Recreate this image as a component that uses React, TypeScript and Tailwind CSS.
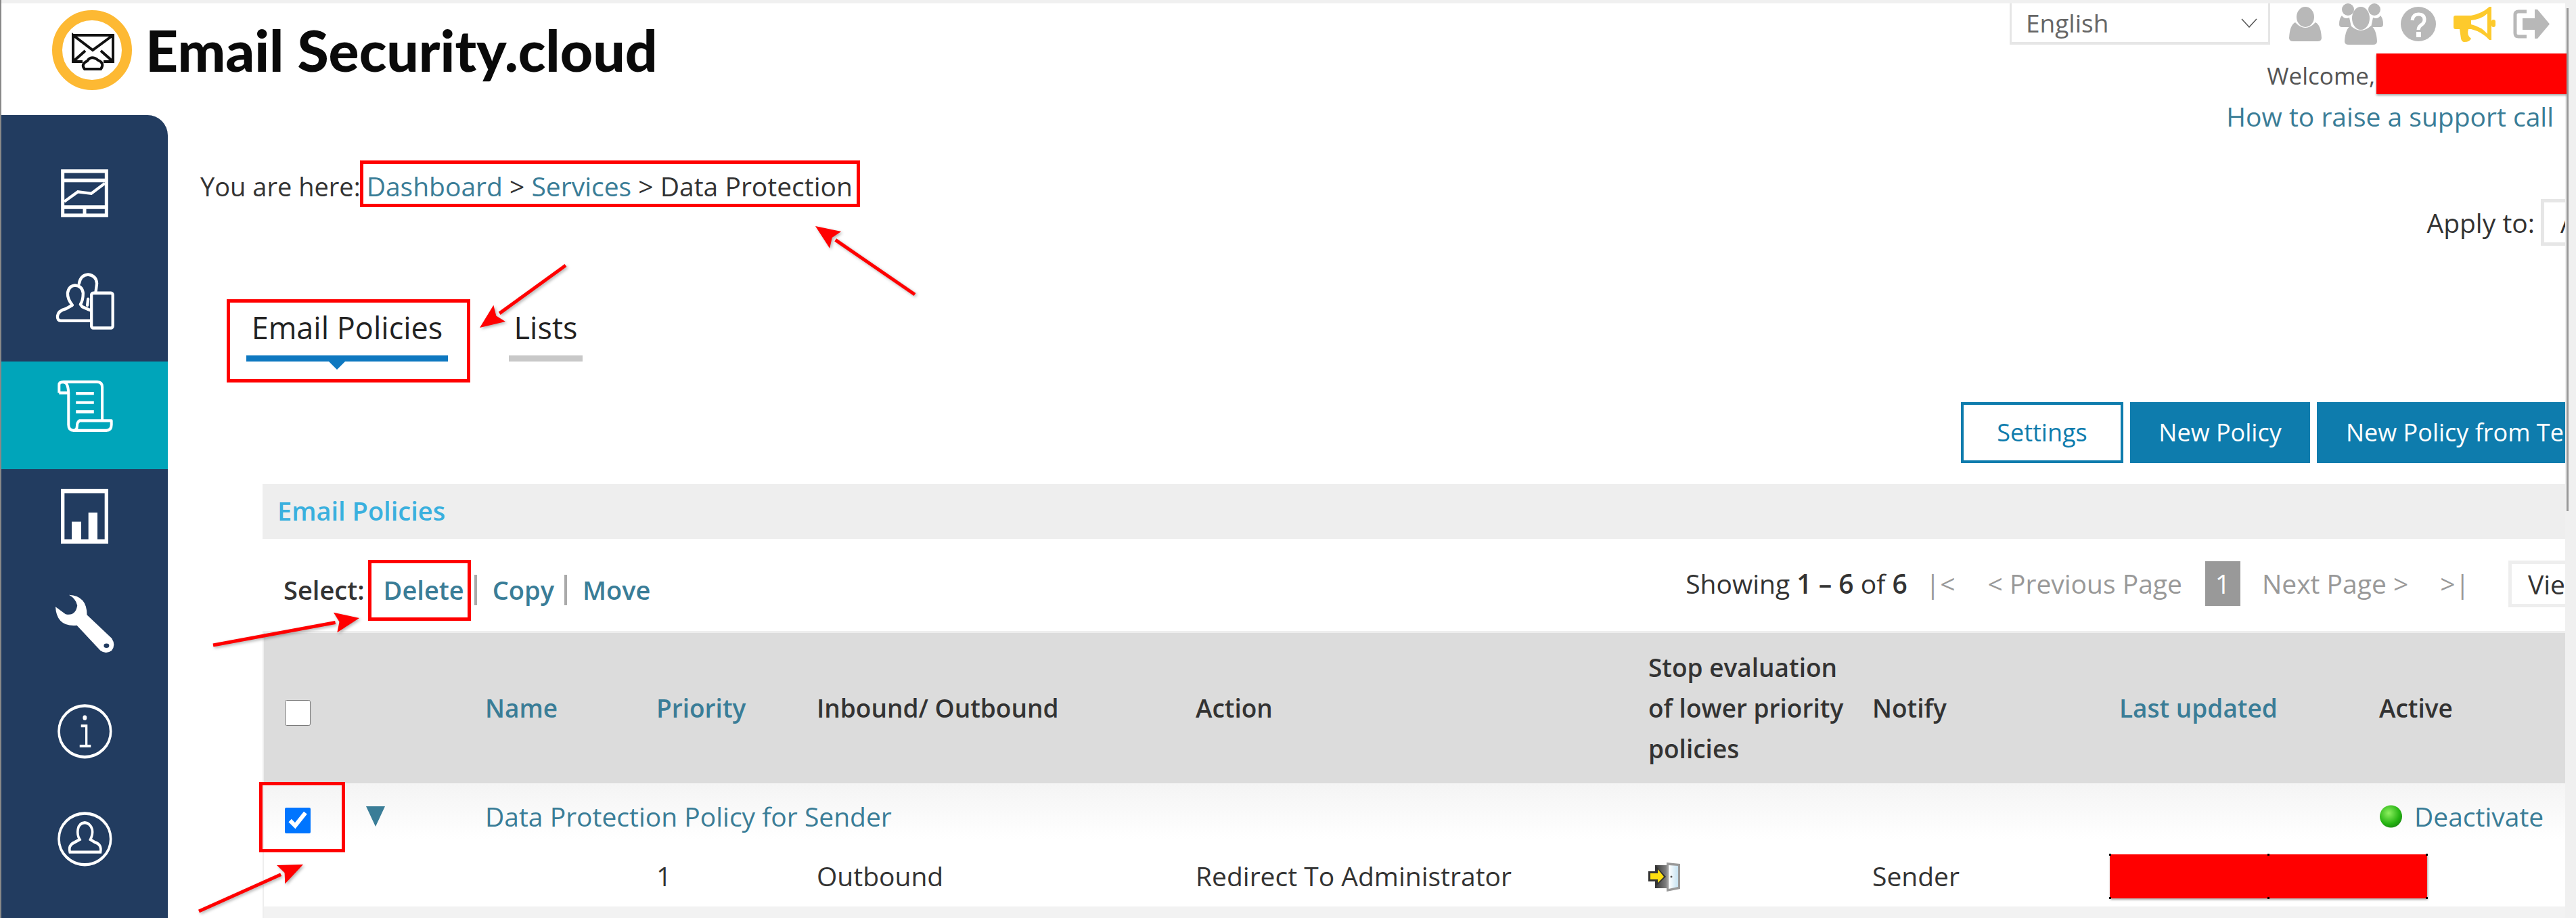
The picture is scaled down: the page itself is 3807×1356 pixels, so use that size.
import type { ReactNode } from 'react';

const GRID_COLS = 'grid grid-cols-[327px_253px_237px_560px_669px_331px_365px_384px_275px]';

const Arrow = ({ x1, y1, x2, y2 }: { x1: number; y1: number; x2: number; y2: number }) => {
    const len = Math.hypot(x2 - x1, y2 - y1);
    const ux = (x2 - x1) / len;
    const uy = (y2 - y1) / len;
    const bx = x2 - ux * 36;
    const by = y2 - uy * 36;
    const nx = bx - ux * -6;
    const ny = by - uy * -6;
    const points = `${x2},${y2} ${bx - uy * 15},${by + ux * 15} ${nx},${ny} ${bx + uy * 15},${by - ux * 15}`;
    return (
        <g>
            <line x1={x1} y1={y1} x2={bx} y2={by} stroke="#f00" strokeWidth="5" />
            <polygon points={points} fill="#f00" />
        </g>
    );
};

const DashboardIcon = () => (
    <svg viewBox="280 252 210 198" preserveAspectRatio="none" className="w-[70px] h-[71px]" fill="none" stroke="#fff" strokeWidth="15">
        <rect x="288" y="260" width="194" height="182" />
        <path d="M288 298H482M288 408H482M385 408V442" />
        <path d="M295 385L355 345L415 352L475 310" strokeWidth="12" />
    </svg>
);

const PeopleIcon = () => (
    <svg viewBox="250 678 268 242" preserveAspectRatio="none" className="w-[89px] h-[86px]" fill="none" stroke="#fff" strokeWidth="13" strokeLinecap="round" strokeLinejoin="round">
        <path d="M408 880H278Q260 880 262 860Q265 838 300 830L328 815Q306 790 307 765Q312 735 340 733Q372 735 376 765Q376 795 364 812L372 822L405 835" />
        <path d="M358 725Q365 690 398 688Q435 692 437 725L432 762M395 815L398 790" />
        <rect x="413" y="765" width="95" height="145" rx="8" />
    </svg>
);

const ScrollIcon = () => (
    <svg viewBox="260 1124 250 218" preserveAspectRatio="none" className="w-[83px] h-[78px]" fill="none" stroke="#fff" strokeWidth="12" strokeLinejoin="round">
        <path d="M290 1133H440Q462 1133 462 1155V1293" />
        <path d="M270 1178V1145Q270 1133 290 1133Q310 1135 312 1178H270" />
        <path d="M312 1178V1310Q312 1333 335 1333H480Q503 1333 503 1310V1293H360Q350 1300 350 1315Q350 1333 335 1333" />
        <path d="M345 1180H425M345 1218H425M345 1256H425" />
    </svg>
);

const ReportIcon = () => (
    <svg viewBox="280 5 210 200" preserveAspectRatio="none" className="w-[70px] h-[81px]" fill="#fff">
        <rect x="288" y="13" width="194" height="184" fill="none" stroke="#fff" strokeWidth="16" />
        <rect x="328" y="125" width="42" height="68" />
        <rect x="402" y="92" width="40" height="101" />
    </svg>
);

const WrenchIcon = () => (
    <svg viewBox="255 390 262 215" preserveAspectRatio="none" className="w-[87px] h-[87px]">
        <path
            fill="#fff"
            d="M315 392Q395 395 395 465L505 550Q525 575 505 595Q480 610 455 595L350 503Q260 510 255 435L300 462Q345 470 352 430Q345 405 315 392Z"
        />
        <ellipse cx="482" cy="577" rx="12" ry="8" fill="#223c60" />
    </svg>
);

const InfoIcon = () => (
    <svg viewBox="263 788 245 201" preserveAspectRatio="none" className="w-[81px] h-[81px]" fill="none" stroke="#fff">
        <ellipse cx="385" cy="888" rx="116" ry="94" strokeWidth="11" />
        <circle cx="385" cy="838" r="9" fill="#fff" stroke="none" />
        <path d="M368 868H392V942M362 942H412" strokeWidth="10" />
    </svg>
);

const UserCircleIcon = () => (
    <svg viewBox="263 1180 245 201" preserveAspectRatio="none" className="w-[81px] h-[81px]" fill="none" stroke="#fff">
        <ellipse cx="385" cy="1280" rx="116" ry="94" strokeWidth="11" />
        <path
            d="M318 1328H455Q462 1300 430 1292L410 1282Q422 1262 418 1245Q410 1222 385 1220Q358 1222 354 1245Q350 1265 362 1282L340 1292Q310 1302 318 1328Z"
            strokeWidth="11"
        />
    </svg>
);

const PersonIcon = () => (
    <svg viewBox="0 0 48 51" className="w-[48px] h-[51px]" fill="#b8b8b8">
        <ellipse cx="24" cy="15" rx="13" ry="15" />
        <path d="M9 23Q24 39 39 23Q47 27 48 46Q48 51 42 51H6Q0 51 0 46Q1 27 9 23Z" />
    </svg>
);

const GroupIcon = () => (
    <svg viewBox="0 0 65 61" className="w-[65px] h-[61px]" fill="#b8b8b8">
        <ellipse cx="13" cy="9" rx="9" ry="9" />
        <ellipse cx="52" cy="9" rx="9" ry="9" />
        <path d="M4 18Q8 24 15 21L18 35H4Q0 35 0 31Q0 22 4 18Z" />
        <path d="M61 18Q57 24 50 21L47 35H61Q65 35 65 31Q65 22 61 18Z" />
        <ellipse cx="32" cy="22" rx="13" ry="17" />
        <path d="M17 33Q32 47 47 33Q55 38 56 56Q56 61 50 61H14Q8 61 8 56Q9 38 17 33Z" />
    </svg>
);

const HelpIcon = () => (
    <svg viewBox="0 0 52 51" className="w-[52px] h-[51px]">
        <ellipse cx="26" cy="25.5" rx="26" ry="25.5" fill="#b8b8b8" />
        <path d="M17 20Q18 11 26 11Q35 11 35 19Q35 24 30 27Q26 30 26 34" fill="none" stroke="#fff" strokeWidth="5" />
        <rect x="23" y="37" width="7" height="8" fill="#fff" />
    </svg>
);

const MegaphoneIcon = () => (
    <svg viewBox="0 0 62 52" className="w-[62px] h-[52px]" fill="#fdca2c">
        <path d="M3 13H26Q42 10 53 0H56V49H53Q42 37 26 33H3Q0 33 0 30V16Q0 13 3 13Z" />
        <path d="M26 20Q42 18 50 10V40Q42 30 26 26Z" fill="#fff" />
        <rect x="56" y="19" width="6" height="11" rx="3" />
        <path d="M9 33H22Q19 42 26 47Q24 52 16 52Q12 52 11 47Z" />
    </svg>
);

const LogoutIcon = () => (
    <svg viewBox="0 0 54 43" className="w-[54px] h-[43px]">
        <path d="M20 3H8Q3 3 3 8V35Q3 40 8 40H20" fill="none" stroke="#b8b8b8" strokeWidth="5" />
        <path d="M14 13H32V0H36L54 21.5L36 43H32V30H14Z" fill="#b8b8b8" />
    </svg>
);

const LogoMark = () => (
    <svg viewBox="0 0 118 118" className="w-[118px] h-[118px] shrink-0">
        <circle cx="59" cy="59" r="51.5" fill="none" stroke="#fdb933" strokeWidth="15" />
        <path
            d="M31 37H90V76H76M45 76H31V37L60 59L90 37M31 76L49 60M90 76L72 60"
            fill="none"
            stroke="#111"
            strokeWidth="4"
        />
        <path d="M48 87Q42 80 52 75Q58 66 68 74Q78 78 72 87Z" fill="#fff" stroke="#111" strokeWidth="4" />
    </svg>
);

const DoorIcon = () => (
    <svg viewBox="0 0 48 45" className="w-[48px] h-[45px]">
        <defs>
            <linearGradient id="doorGap" x1="0" x2="1" y1="0" y2="0">
                <stop offset="0" stopColor="#333" />
                <stop offset="1" stopColor="#888" />
            </linearGradient>
            <linearGradient id="doorPanel" x1="0" x2="1" y1="0" y2="0">
                <stop offset="0" stopColor="#fff" />
                <stop offset="1" stopColor="#c6e2f2" />
            </linearGradient>
        </defs>
        <rect x="10" y="6" width="18" height="34" fill="url(#doorGap)" />
        <path d="M27 2L47 4V41L27 45Z" fill="#9a9a9a" />
        <path d="M30 6L44 7V38L30 41Z" fill="url(#doorPanel)" />
        <circle cx="34" cy="23" r="1.5" fill="#555" />
        <path d="M0 15H11V7L26 23L11 37V30H0Z" fill="#333" />
        <path d="M3 18H14V12L23 23L14 32V27H3Z" fill="#fde010" />
    </svg>
);

const StatusDot = () => (
    <svg viewBox="0 0 35 34" className="w-[35px] h-[34px]">
        <defs>
            <radialGradient id="statusGreen" cx="0.4" cy="0.35" r="0.7">
                <stop offset="0" stopColor="#8ef060" />
                <stop offset="0.7" stopColor="#25b412" />
                <stop offset="1" stopColor="#1a8a10" />
            </radialGradient>
        </defs>
        <ellipse cx="17.5" cy="17" rx="16.5" ry="16.5" fill="url(#statusGreen)" />
    </svg>
);

const NavItem = ({ className, children }: { className: string; children: ReactNode }) => (
    <div className={`flex justify-center ${className}`}>{children}</div>
);

const Cell = ({ className = '', children }: { className?: string; children?: ReactNode }) => (
    <div className={`whitespace-nowrap ${className}`}>{children}</div>
);

const LINK = 'text-[#3a7d97]';

const App = () => {
    return (
        <div className="relative flex w-[3807px] h-[1356px] overflow-hidden bg-[#f0f0f0] border-l-2 border-[#888] font-['Open_Sans',sans-serif] text-[39px] text-[#333] leading-[46px]">
            <div className="flex flex-col w-[3789px] mt-[5px] bg-white">
                {/* top header */}
                <div className="flex justify-between items-start h-[165px]">
                    <div className="flex items-center pl-[75px] pt-[10px]">
                        <LogoMark />
                        <span className="ml-[20px] font-[Lato,sans-serif] text-[84px] leading-[90px] font-black text-[#0a0a0a] whitespace-nowrap">
                            Email Security.cloud
                        </span>
                    </div>
                    <div className="flex flex-col items-end">
                        <div className="flex items-center gap-[26px] pr-[23px] h-[61px]">
                            <div className="flex items-center justify-between w-[385px] h-[61px] mr-[2px] pl-[21px] pr-[16px] border-x-[3px] border-b-[4px] border-[#e6e6e6] text-[37px] text-[#666]">
                                <span>English</span>
                                <svg viewBox="0 0 24 14" className="w-[24px] h-[14px]" fill="none" stroke="#555" strokeWidth="1.5">
                                    <path d="M1 1L12 13L23 1" />
                                </svg>
                            </div>
                            <PersonIcon />
                            <GroupIcon />
                            <HelpIcon />
                            <MegaphoneIcon />
                            <LogoutIcon />
                        </div>
                        <div className="flex items-center mt-[13px] h-[60px] mr-[-3px] text-[35px] text-[#555]">
                            <span className="mt-[6px]">Welcome,</span>
                            <div className="w-[282px] h-[60px] ml-[2px] bg-[#f00] shadow-[0_2px_3px_rgba(0,0,0,0.35)]" />
                        </div>
                        <div className={`flex items-center h-[66px] pr-[17px] ${LINK}`}>How to raise a support call</div>
                    </div>
                </div>

                <div className="flex flex-1">
                    {/* sidebar */}
                    <div className="flex flex-col w-[246px] shrink-0 bg-[#223c60] rounded-tr-[30px]">
                        <NavItem className="h-[205px] pt-[80px]">
                            <DashboardIcon />
                        </NavItem>
                        <NavItem className="h-[159px] pt-[27px]">
                            <PeopleIcon />
                        </NavItem>
                        <NavItem className="h-[159px] pt-[27px] bg-[#00a5ba]">
                            <ScrollIcon />
                        </NavItem>
                        <NavItem className="h-[157px] pt-[29px]">
                            <ReportIcon />
                        </NavItem>
                        <NavItem className="h-[160px] pt-[28px]">
                            <WrenchIcon />
                        </NavItem>
                        <NavItem className="h-[160px] pt-[30px]">
                            <InfoIcon />
                        </NavItem>
                        <NavItem className="flex-1 pt-[29px]">
                            <UserCircleIcon />
                        </NavItem>
                    </div>

                    {/* main column */}
                    <div className="flex flex-col flex-1 min-w-0">
                        <div className="flex justify-between items-start">
                            <div className="mt-[82px] ml-[48px] whitespace-nowrap">
                                <span className="text-[38px]">You are here:</span>
                                <span className={`ml-[9px] ${LINK}`}>Dashboard</span> &gt; <span className={LINK}>Services</span> &gt; Data Protection
                            </div>
                            <div className="flex items-center mt-[124px]">
                                <span className="mr-[9px]">Apply to:</span>
                                <div className="w-[36px] h-[69px] pl-[24px] border-l-[5px] border-y-[5px] border-[#e6e6e6] overflow-hidden leading-[59px]">
                                    All
                                </div>
                            </div>
                        </div>

                        {/* tabs */}
                        <div className="flex mt-[91px] ml-[116px] gap-[90px]">
                            <div className="relative flex flex-col items-center w-[298px]">
                                <div className="h-[60px] text-[45px] leading-[60px] text-[#222] whitespace-nowrap">Email Policies</div>
                                <div className="w-full h-[9px] mt-[11px] bg-[#0e78c0]" />
                                <div className="absolute left-[122px] top-[80px] w-0 h-0 border-x-[12px] border-x-transparent border-t-[12px] border-t-[#0e78c0]" />
                            </div>
                            <div className="flex flex-col items-center w-[109px]">
                                <div className="h-[60px] text-[45px] leading-[60px] text-[#222]">Lists</div>
                                <div className="w-full h-[9px] mt-[11px] bg-[#c8c8c8]" />
                            </div>
                        </div>

                        {/* actions */}
                        <div className="flex justify-end gap-[10px] h-[90px] mt-[60px] text-[36px]">
                            <button className="w-[240px] border-4 border-[#0e7cad] text-[#0e7cad]">Settings</button>
                            <button className="w-[266px] bg-[#0e7cad] text-white">New Policy</button>
                            <button className="w-[367px] pl-[43px] bg-[#0e7cad] text-white text-left whitespace-nowrap overflow-hidden">
                                New Policy from Template
                            </button>
                        </div>

                        {/* policies panel */}
                        <div className="flex flex-col flex-1 mt-[31px] ml-[140px]">
                            <div className="flex items-center h-[81px] pl-[22px] pb-[4px] bg-[#eeeeee] text-[38px] text-[#3ab0de] font-semibold">Email Policies</div>
                            <div className="flex justify-between h-[136px]">
                                <div className="flex items-center h-[150px] pl-[31px] text-[38px] font-semibold">
                                    <span>Select:</span>
                                    <span className={`ml-[28px] ${LINK}`}>Delete</span>
                                    <div className="w-[4px] h-[45px] ml-[15px] bg-[#aaa]" />
                                    <span className={`ml-[23px] ${LINK}`}>Copy</span>
                                    <div className="w-[4px] h-[45px] ml-[15px] bg-[#aaa]" />
                                    <span className={`ml-[23px] ${LINK}`}>Move</span>
                                </div>
                                <div className="flex items-center h-[132px] whitespace-nowrap">
                                    <span>
                                        Showing <b className="font-semibold">1 – 6</b> of <b className="font-semibold">6</b>
                                    </span>
                                    <span className="ml-[27px] text-[#999]">|&lt;</span>
                                    <span className="ml-[48px] text-[#999]">&lt; Previous Page</span>
                                    <div className="flex items-center justify-center w-[52px] h-[66px] ml-[34px] bg-[#999] text-white">1</div>
                                    <span className="ml-[32px] text-[#999]">Next Page &gt;</span>
                                    <span className="ml-[47px] text-[#999]">&gt;|</span>
                                    <div className="w-[84px] h-[69px] ml-[57px] pl-[24px] border-l-[5px] border-y-[5px] border-[#eeeeee] overflow-hidden leading-[59px]">
                                        View
                                    </div>
                                </div>
                            </div>

                            {/* table */}
                            <div className="flex flex-col flex-1 border-t-[3px] border-l-[2px] border-[#eeeeee]">
                                <div className={`${GRID_COLS} items-center h-[222px] bg-[#dcdcdc] text-[37px] font-semibold leading-[60px]`}>
                                    <Cell className="pl-[31px] pt-[14px] flex items-center">
                                        <input type="checkbox" readOnly className="w-[38px] h-[38px]" />
                                    </Cell>
                                    <Cell className={LINK}>Name</Cell>
                                    <Cell className={LINK}>Priority</Cell>
                                    <Cell>Inbound/ Outbound</Cell>
                                    <Cell>Action</Cell>
                                    <Cell>
                                        Stop evaluation
                                        <br />
                                        of lower priority
                                        <br />
                                        policies
                                    </Cell>
                                    <Cell>Notify</Cell>
                                    <Cell className={LINK}>Last updated</Cell>
                                    <Cell>Active</Cell>
                                </div>
                                <div className={`${GRID_COLS} items-center h-[83px] pt-[15px] bg-gradient-to-b from-[#f4f4f4] to-white`}>
                                    <Cell className="flex items-center pl-[31px] pt-[12px]">
                                        <input type="checkbox" checked readOnly className="w-[38px] h-[38px] accent-[#0075ff]" />
                                        <div className="w-0 h-0 ml-[82px] mt-[-12px] border-x-[14px] border-x-transparent border-t-[30px] border-t-[#3a7d97]" />
                                    </Cell>
                                    <Cell className={LINK}>Data Protection Policy for Sender</Cell>
                                    <Cell />
                                    <Cell />
                                    <Cell />
                                    <Cell />
                                    <Cell />
                                    <Cell />
                                    <Cell className="flex items-center gap-[17px]">
                                        <StatusDot />
                                        <span className={LINK}>Deactivate</span>
                                    </Cell>
                                </div>
                                <div className={`${GRID_COLS} items-center h-[99px] pt-[9px] bg-white`}>
                                    <Cell />
                                    <Cell />
                                    <Cell>1</Cell>
                                    <Cell>Outbound</Cell>
                                    <Cell>Redirect To Administrator</Cell>
                                    <Cell>
                                        <DoorIcon />
                                    </Cell>
                                    <Cell>Sender</Cell>
                                    <Cell>
                                        <div className="relative w-[469px] h-[65px] ml-[-14px] bg-[#f00] shadow-[1px_2px_3px_rgba(0,0,0,0.35)]">
                                            <div className="absolute left-[-1px] top-[-1px] w-[3px] h-[3px] bg-black" />
                                            <div className="absolute left-[233px] top-[-1px] w-[3px] h-[3px] bg-black" />
                                            <div className="absolute right-[-1px] top-[-1px] w-[3px] h-[3px] bg-black" />
                                            <div className="absolute left-[-1px] bottom-[-1px] w-[3px] h-[3px] bg-black" />
                                            <div className="absolute left-[233px] bottom-[-1px] w-[3px] h-[3px] bg-black" />
                                            <div className="absolute right-[-1px] bottom-[-1px] w-[3px] h-[3px] bg-black" />
                                        </div>
                                    </Cell>
                                    <Cell />
                                </div>
                                <div className="flex-1 bg-[#f2f2f2]" />
                            </div>
                        </div>
                    </div>
                </div>
            </div>

            {/* scrollbar strip */}
            <div className="flex-1 pt-[12px] pl-[2px]">
                <div className="w-[3px] h-[743px] bg-[#999]" />
            </div>

            {/* red annotations drawn over the page */}
            <div className="absolute left-[530px] top-[237px] w-[739px] h-[69px] border-[5px] border-[#f00]" />
            <div className="absolute left-[333px] top-[442px] w-[360px] h-[123px] border-[5px] border-[#f00]" />
            <div className="absolute left-[542px] top-[827px] w-[152px] h-[90px] border-[5px] border-[#f00]" />
            <div className="absolute left-[381px] top-[1155px] w-[127px] h-[104px] border-[5px] border-[#f00]" />
            <svg className="absolute left-[-2px] top-0 w-[3807px] h-[1356px] pointer-events-none drop-shadow-[2px_2px_2px_rgba(0,0,0,0.3)]">
                <Arrow x1={1352} y1={435} x2={1205} y2={334} />
                <Arrow x1={836} y1={392} x2={709} y2={484} />
                <Arrow x1={315} y1={953} x2={531} y2={913} />
                <Arrow x1={294} y1={1346} x2={448} y2={1277} />
            </svg>
        </div>
    );
};

export default App;
